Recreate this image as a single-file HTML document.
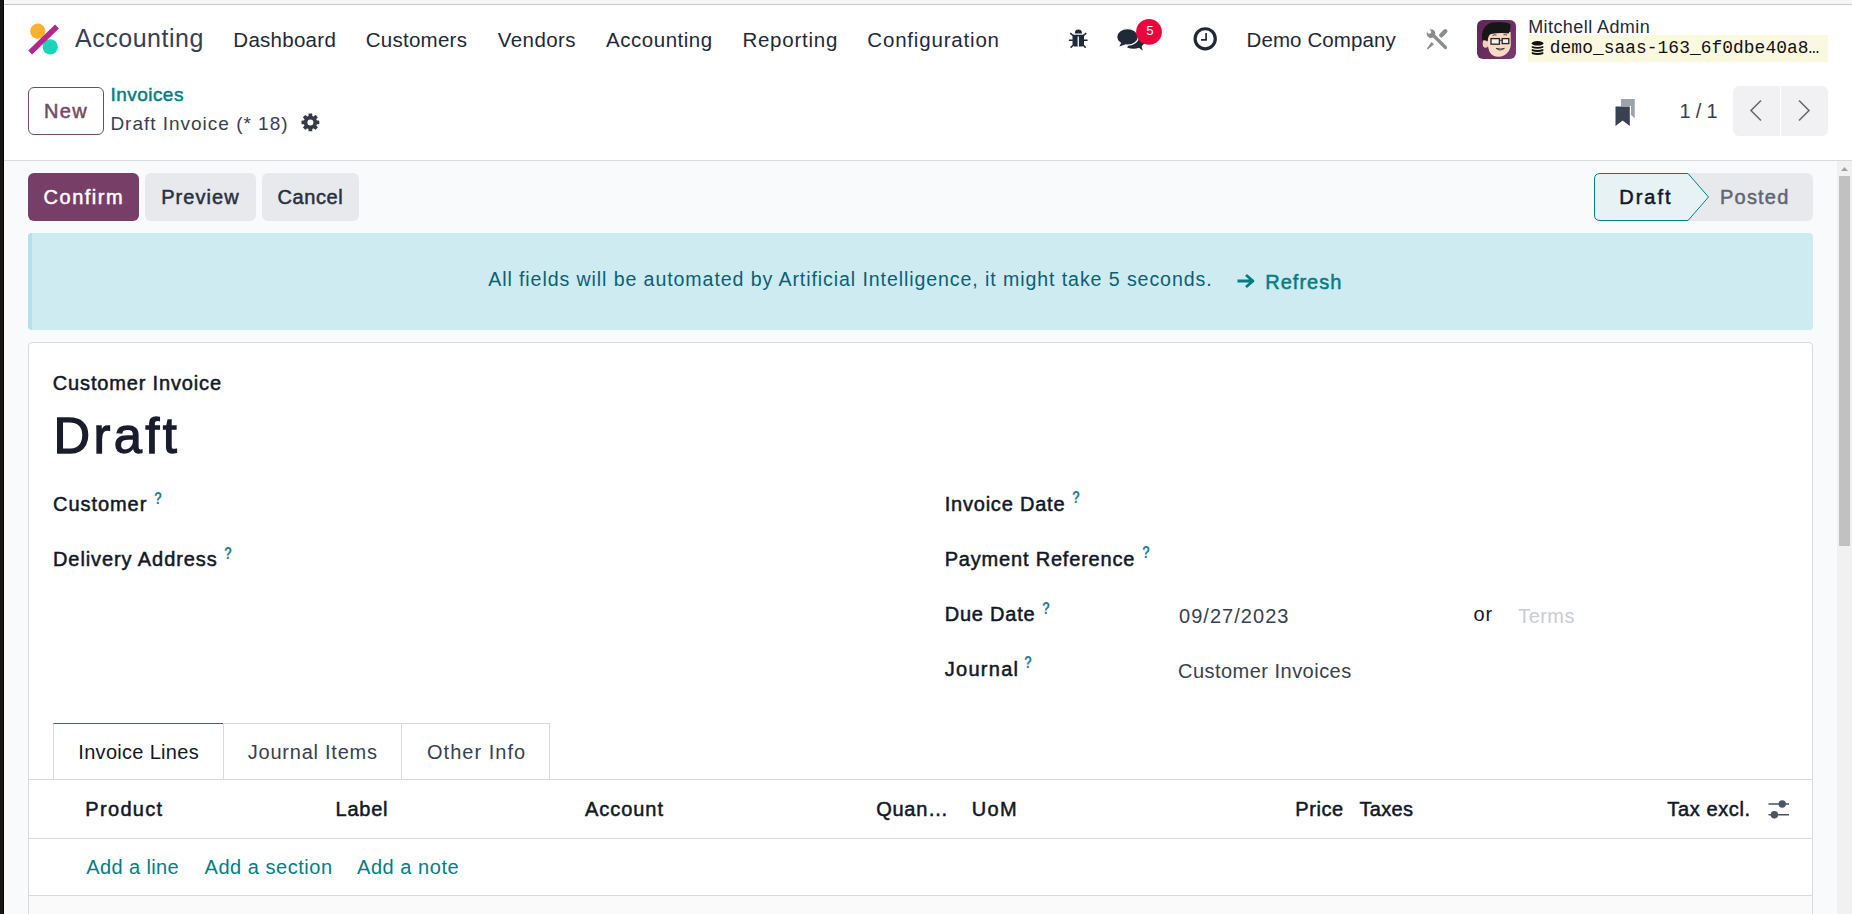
<!DOCTYPE html>
<html><head><meta charset="utf-8">
<style>
html,body{margin:0;padding:0}
body{width:1852px;height:914px;overflow:hidden;position:relative;background:#f9fafb;font-family:"Liberation Sans",sans-serif}
.a{position:absolute;box-sizing:border-box}
.t{position:absolute;white-space:nowrap}
svg{position:absolute;overflow:visible}
</style></head><body>
<!-- window frame -->
<div class="a" style="left:0;top:0;width:3px;height:914px;background:#171615"></div>
<div class="a" style="left:3px;top:0;width:1px;height:914px;background:#050505"></div>
<div class="a" style="left:4px;top:0;width:1848px;height:161px;background:#fff"></div>
<div class="a" style="left:5px;top:0;width:1847px;height:4px;background:#f6f6f6"></div>
<div class="a" style="left:4px;top:4px;width:1848px;height:1px;background:#c6c6c6"></div>
<div class="a" style="left:4px;top:160px;width:1848px;height:1px;background:#d8dadd"></div>

<!-- scrollbar -->
<div class="a" style="left:1837px;top:161px;width:15px;height:753px;background:#f1f1f1"></div>
<div class="a" style="left:1839px;top:176px;width:11px;height:370px;background:#c1c1c1"></div>
<svg style="left:1837px;top:161px" width="15" height="14"><polygon points="4,10 11,10 7.5,6" fill="#a3a3a3"/></svg>

<!-- logo -->
<svg style="left:20px;top:15px" width="50" height="50" viewBox="0 0 50 50">
  <circle cx="17.8" cy="16.2" r="7.6" fill="#fbb130"/>
  <circle cx="30.2" cy="31.9" r="7.6" fill="#1ad3bb"/>
  <line x1="10.2" y1="37.4" x2="37" y2="11.4" stroke="#b0278f" stroke-width="5.6" stroke-linecap="butt"/>
</svg>

<!-- bug icon -->
<svg style="left:1064px;top:24px" width="30" height="30" viewBox="0 0 30 30">
  <path d="M10.8 9.6 A3.6 4.1 0 0 1 18 9.6 Z" fill="#1f2937"/>
  <path d="M8.5 10.8 H20 V19.5 Q20 22.6 17 22.6 H11.5 Q8.5 22.6 8.5 19.5 Z" fill="#1f2937"/>
  <rect x="13.6" y="12.5" width="1.3" height="10.2" fill="#fff"/>
  <path d="M6.2 9.2 L9.2 11.6 M22.3 9.2 L19.3 11.6 M4.9 16.2 H8.8 M23.6 16.2 H19.7 M6.6 23.6 L9.4 21 M21.7 23.6 L19.1 21" stroke="#1f2937" stroke-width="1.5" fill="none"/>
</svg>

<!-- comments icon -->
<svg style="left:1112px;top:14px" width="54" height="42" viewBox="0 0 54 42">
  <path d="M15.2 33.4 C19 35 23.5 35 27 33.8 L30.8 36.8 L29.6 32.2 C33.5 29.5 34.5 25 33 21 L20 24 Z" fill="#1f2937"/>
  <ellipse cx="15.5" cy="22.9" rx="10.8" ry="8.3" fill="#1f2937" stroke="#fff" stroke-width="1.2"/>
  <path d="M9.2 28.8 L7.4 32.6 L13.8 30.2 Z" fill="#1f2937"/>
  <circle cx="37" cy="17.9" r="12.9" fill="#e8063c"/>
</svg>

<!-- clock icon -->
<svg style="left:1190px;top:24px" width="30" height="30" viewBox="0 0 30 30">
  <circle cx="15.2" cy="14.85" r="10.1" fill="none" stroke="#1f2937" stroke-width="3.2"/>
  <path d="M16.1 9 V15.9 H11" fill="none" stroke="#1f2937" stroke-width="1.7"/>
</svg>

<!-- tools icon -->
<svg style="left:1422px;top:24px" width="30" height="30" viewBox="0 0 30 30">
  <line x1="11.5" y1="11.5" x2="23.5" y2="23.5" stroke="#8b8c90" stroke-width="3.2" stroke-linecap="round"/>
  <circle cx="9" cy="9.6" r="4.3" fill="#8b8c90"/>
  <path d="M5.5 6 L8.4 9 L7.6 5 Z" fill="#fff"/>
  <circle cx="7.2" cy="7.8" r="2" fill="#fff"/>
  <line x1="19.3" y1="11.3" x2="23.3" y2="7.3" stroke="#8b8c90" stroke-width="4.4" stroke-linecap="round"/>
  <path d="M9.5 17.9 L12 20.3 L6.4 25 L4.9 25.4 L5.2 24 Z" fill="#8b8c90"/>
</svg>

<!-- avatar -->
<div class="a" style="left:1477px;top:20px;width:39px;height:39px;border-radius:6px;background:linear-gradient(120deg,#5b2752,#6e3064 60%,#7a3a70);overflow:hidden">
  <svg style="left:0;top:0" width="39" height="39" viewBox="0 0 39 39">
    <ellipse cx="8.6" cy="23.5" rx="2.9" ry="4.3" fill="#f5cdb0"/>
    <path d="M10.5 13 C10 20 10.5 28 13 32.5 C15 36 18.5 37 22 36.8 C28 36.2 33 32 33.8 25 L33.6 12 Z" fill="#f8dac3"/>
    <path d="M5.2 20.5 C4 12 7 4.5 15 2.6 C22 1.2 30 2.2 33.4 4 C33.8 8 33 12 31.5 13.6 C27 12.4 20 12.8 14 14 C11.5 15 11 18 10.6 21.5 C8.5 20 6.5 20 5.2 20.5 Z" fill="#161616"/>
    <path d="M15.5 15.6 Q17.5 14.2 19.5 15.2 M26.5 14.8 Q28.5 14.2 30 15.2" stroke="#3a2a2a" stroke-width="0.9" fill="none"/>
    <rect x="14" y="18.6" width="8.4" height="5.6" fill="#f4f1ee" stroke="#262626" stroke-width="1.3"/>
    <rect x="25.2" y="18.6" width="6.6" height="5" fill="#f4f1ee" stroke="#262626" stroke-width="1.3"/>
    <path d="M22.4 20.2 H25.2" stroke="#262626" stroke-width="1.1"/>
    <path d="M19.2 28.4 Q23.3 31.6 27.4 28.4 Q23.3 29.6 19.2 28.4 Z" fill="#fff" stroke="#3b2a2a" stroke-width="0.9"/>
  </svg>
</div>

<!-- db badge -->
<div class="a" style="left:1528px;top:35px;width:300px;height:27px;background:#fbf8e0"></div>
<svg style="left:1531px;top:41px" width="14" height="15" viewBox="0 0 14 15">
  <ellipse cx="6.55" cy="2.3" rx="5.8" ry="2.3" fill="#111"/>
  <path d="M0.8 4.9 Q6.55 6.9 12.3 4.9 L12.3 6.8 Q6.55 8.8 0.8 6.8 Z" fill="#111"/>
  <path d="M0.8 8.0 Q6.55 10.0 12.3 8.0 L12.3 9.9 Q6.55 11.9 0.8 9.9 Z" fill="#111"/>
  <path d="M0.8 11.0 Q6.55 13.0 12.3 11.0 L12.3 12.9 Q6.55 14.9 0.8 12.9 Z" fill="#111"/>
</svg>

<!-- New button -->
<div class="a" style="left:28px;top:87px;width:76px;height:48px;border:1px solid #714b67;border-radius:6px;background:#fff"></div>

<!-- gear -->
<svg style="left:300px;top:113px" width="21" height="19" viewBox="0 0 21 19">
  <g transform="translate(10.4,9.4)">
    <circle r="6.7" fill="#323a48"/>
    <g fill="#323a48">
      <rect x="-1.9" y="-8.9" width="3.8" height="17.8" rx="0.6"/>
      <rect x="-1.9" y="-8.9" width="3.8" height="17.8" rx="0.6" transform="rotate(45)"/>
      <rect x="-1.9" y="-8.9" width="3.8" height="17.8" rx="0.6" transform="rotate(90)"/>
      <rect x="-1.9" y="-8.9" width="3.8" height="17.8" rx="0.6" transform="rotate(135)"/>
    </g>
    <circle r="3" fill="#fff"/>
  </g>
</svg>

<!-- bookmarks -->
<svg style="left:1614px;top:98px" width="22" height="29" viewBox="0 0 22 29">
  <path d="M7 1 H20.5 V20 L19 18.6 V1 Z" fill="#9ca3af"/>
  <path d="M7 1 H20.5 V19.8 L17 17 V8 H7 Z" fill="#9ca3af"/>
  <path d="M1.5 8.5 H15.8 V28 L8.65 22.5 L1.5 28 Z" fill="#374151"/>
</svg>

<!-- pager -->
<div class="a" style="left:1733px;top:86px;width:95px;height:50px;border-radius:6px;background:#f1f1f4"></div>
<div class="a" style="left:1780px;top:86px;width:1px;height:50px;background:#fff"></div>
<svg style="left:1748px;top:99px" width="16" height="23" viewBox="0 0 16 23"><path d="M13 1.5 L3 11.5 L13 21.5" fill="none" stroke="#6b6b6b" stroke-width="1.6"/></svg>
<svg style="left:1796px;top:99px" width="16" height="23" viewBox="0 0 16 23"><path d="M3 1.5 L13 11.5 L3 21.5" fill="none" stroke="#6b6b6b" stroke-width="1.6"/></svg>

<!-- action buttons -->
<div class="a" style="left:28px;top:173px;width:111px;height:48px;border-radius:6px;background:#773e68"></div>
<div class="a" style="left:145px;top:173px;width:111px;height:48px;border-radius:6px;background:#e7e9ed"></div>
<div class="a" style="left:262px;top:173px;width:97px;height:48px;border-radius:6px;background:#e7e9ed"></div>

<!-- statusbar -->
<div class="a" style="left:1680px;top:173px;width:133px;height:48px;border-radius:0 6px 6px 0;background:#e7e9ed"></div>
<svg style="left:1594px;top:173px" width="118" height="48" viewBox="0 0 118 48">
  <path d="M6 0.5 H94 L114.5 24 L94 47.5 H6 Q0.5 47.5 0.5 42 V6 Q0.5 0.5 6 0.5 Z" fill="#e6f2f3" stroke="#017e84" stroke-width="1"/>
</svg>

<!-- banner -->
<div class="a" style="left:28px;top:233px;width:1785px;height:97px;border-radius:4px;background:#cdebf0;overflow:hidden"><div class="a" style="left:0;top:0;width:4px;height:97px;background:#b5e1e9"></div></div>
<svg style="left:1236px;top:273px" width="20" height="16" viewBox="0 0 20 16">
  <path d="M1.5 8 H16.5 M10 2 L17 8 L10 14" fill="none" stroke="#017e84" stroke-width="2.8" stroke-linejoin="round"/>
</svg>

<!-- sheet -->
<div class="a" style="left:28px;top:342px;width:1785px;height:620px;border:1px solid #d8dadd;border-radius:4px;background:#fff"></div>

<!-- tabs -->
<div class="a" style="left:29px;top:779px;width:1783px;height:1px;background:#d8dadd"></div>
<div class="a" style="left:53px;top:723px;width:171px;height:56px;border:1px solid #d8dadd;border-top-color:#714b67;border-bottom:none;background:#fff"></div>
<div class="a" style="left:223px;top:723px;width:179px;height:56px;border:1px solid #d8dadd;border-left:none;border-bottom:none"></div>
<div class="a" style="left:401px;top:723px;width:149px;height:56px;border:1px solid #d8dadd;border-bottom:none"></div>

<!-- table -->
<div class="a" style="left:29px;top:838px;width:1783px;height:1px;background:#d8dadd"></div>
<div class="a" style="left:29px;top:895px;width:1783px;height:1px;background:#d8dadd"></div>
<div class="a" style="left:29px;top:896px;width:1783px;height:18px;background:#fafafa"></div>
<svg style="left:1766px;top:798px" width="26" height="22" viewBox="0 0 26 22">
  <path d="M2.5 6 H23 M2.5 16.8 H23" stroke="#475160" stroke-width="1.5"/>
  <circle cx="16.2" cy="6" r="3.7" fill="#4b5563"/>
  <circle cx="8.4" cy="16.8" r="3.7" fill="#4b5563"/>
</svg>

<span class="t" style="left:75.00px;top:25.75px;font:400 25px/1 'Liberation Sans', sans-serif;letter-spacing:0.523px;color:#374151">Accounting</span>
<span class="t" style="left:233.30px;top:29.57px;font:400 20.5px/1 'Liberation Sans', sans-serif;letter-spacing:0.277px;color:#1f2937">Dashboard</span>
<span class="t" style="left:365.70px;top:29.57px;font:400 20.5px/1 'Liberation Sans', sans-serif;letter-spacing:0.268px;color:#1f2937">Customers</span>
<span class="t" style="left:497.80px;top:29.57px;font:400 20.5px/1 'Liberation Sans', sans-serif;letter-spacing:0.421px;color:#1f2937">Vendors</span>
<span class="t" style="left:606.10px;top:29.57px;font:400 20.5px/1 'Liberation Sans', sans-serif;letter-spacing:0.519px;color:#1f2937">Accounting</span>
<span class="t" style="left:742.40px;top:29.57px;font:400 20.5px/1 'Liberation Sans', sans-serif;letter-spacing:0.764px;color:#1f2937">Reporting</span>
<span class="t" style="left:867.30px;top:29.57px;font:400 20.5px/1 'Liberation Sans', sans-serif;letter-spacing:0.814px;color:#1f2937">Configuration</span>
<span class="t" style="left:1246.50px;top:29.57px;font:400 20.5px/1 'Liberation Sans', sans-serif;letter-spacing:0.112px;color:#1f2937">Demo Company</span>
<span class="t" style="left:1528.20px;top:17.70px;font:400 18px/1 'Liberation Sans', sans-serif;letter-spacing:0.421px;color:#1f2937">Mitchell Admin</span>
<span class="t" style="left:1549.80px;top:40.43px;font:400 17.85px/1 'Liberation Mono', monospace;letter-spacing:0.071px;color:#111">demo_saas-163_6f0dbe40a8…</span>
<span class="t" style="left:44.10px;top:101.00px;font:400 20px/1 'Liberation Sans', sans-serif;-webkit-text-stroke:0.5px #714b67;letter-spacing:1.267px;color:#714b67">New</span>
<span class="t" style="left:1146.20px;top:23.78px;font:400 13.2px/1 'Liberation Sans', sans-serif;letter-spacing:0.000px;color:#ffffff">5</span>
<span class="t" style="left:110.40px;top:84.85px;font:400 19px/1 'Liberation Sans', sans-serif;-webkit-text-stroke:0.5px #017e84;letter-spacing:0.471px;color:#017e84">Invoices</span>
<span class="t" style="left:110.40px;top:113.85px;font:400 19px/1 'Liberation Sans', sans-serif;letter-spacing:0.986px;color:#374151">Draft Invoice (* 18)</span>
<span class="t" style="left:1679.40px;top:101.00px;font:400 20px/1 'Liberation Sans', sans-serif;letter-spacing:-0.173px;color:#374151">1 / 1</span>
<span class="t" style="left:43.60px;top:187.00px;font:400 20px/1 'Liberation Sans', sans-serif;-webkit-text-stroke:0.5px #ffffff;letter-spacing:1.508px;color:#ffffff">Confirm</span>
<span class="t" style="left:161.20px;top:187.00px;font:400 20px/1 'Liberation Sans', sans-serif;-webkit-text-stroke:0.5px #283040;letter-spacing:1.068px;color:#283040">Preview</span>
<span class="t" style="left:277.60px;top:187.00px;font:400 20px/1 'Liberation Sans', sans-serif;-webkit-text-stroke:0.5px #283040;letter-spacing:0.577px;color:#283040">Cancel</span>
<span class="t" style="left:1619.20px;top:187.00px;font:400 20px/1 'Liberation Sans', sans-serif;-webkit-text-stroke:0.5px #111827;letter-spacing:2.029px;color:#111827">Draft</span>
<span class="t" style="left:1720.00px;top:187.00px;font:400 20px/1 'Liberation Sans', sans-serif;-webkit-text-stroke:0.5px #5f6673;letter-spacing:1.211px;color:#5f6673">Posted</span>
<span class="t" style="left:488.20px;top:270.34px;font:400 19.6px/1 'Liberation Sans', sans-serif;letter-spacing:0.902px;color:#0c5f75">All fields will be automated by Artificial Intelligence, it might take 5 seconds.</span>
<span class="t" style="left:1265.30px;top:272.00px;font:400 20px/1 'Liberation Sans', sans-serif;-webkit-text-stroke:0.5px #017e84;letter-spacing:0.999px;color:#017e84">Refresh</span>
<span class="t" style="left:52.80px;top:373.00px;font:400 20px/1 'Liberation Sans', sans-serif;-webkit-text-stroke:0.5px #111827;letter-spacing:0.841px;color:#111827">Customer Invoice</span>
<span class="t" style="left:53.60px;top:410.90px;font:400 50.7px/1 'Liberation Sans', sans-serif;-webkit-text-stroke:1.3px #1a1c2e;letter-spacing:3.361px;color:#1a1c2e">Draft</span>
<span class="t" style="left:53.00px;top:494.00px;font:400 20px/1 'Liberation Sans', sans-serif;-webkit-text-stroke:0.5px #111827;letter-spacing:0.953px;color:#111827">Customer</span>
<span class="t" style="left:53.00px;top:549.00px;font:400 20px/1 'Liberation Sans', sans-serif;-webkit-text-stroke:0.5px #111827;letter-spacing:0.909px;color:#111827">Delivery Address</span>
<span class="t" style="left:944.70px;top:494.00px;font:400 20px/1 'Liberation Sans', sans-serif;-webkit-text-stroke:0.5px #111827;letter-spacing:0.786px;color:#111827">Invoice Date</span>
<span class="t" style="left:944.70px;top:549.00px;font:400 20px/1 'Liberation Sans', sans-serif;-webkit-text-stroke:0.5px #111827;letter-spacing:0.810px;color:#111827">Payment Reference</span>
<span class="t" style="left:944.70px;top:604.00px;font:400 20px/1 'Liberation Sans', sans-serif;-webkit-text-stroke:0.5px #111827;letter-spacing:0.790px;color:#111827">Due Date</span>
<span class="t" style="left:944.70px;top:659.00px;font:400 20px/1 'Liberation Sans', sans-serif;-webkit-text-stroke:0.5px #111827;letter-spacing:1.291px;color:#111827">Journal</span>
<span class="t" style="left:1179.00px;top:606.00px;font:400 20px/1 'Liberation Sans', sans-serif;letter-spacing:1.036px;color:#374151">09/27/2023</span>
<span class="t" style="left:1473.50px;top:604.00px;font:400 20px/1 'Liberation Sans', sans-serif;letter-spacing:0.877px;color:#111827">or</span>
<span class="t" style="left:1518.20px;top:606.00px;font:400 20px/1 'Liberation Sans', sans-serif;letter-spacing:0.464px;color:#c9ccd2">Terms</span>
<span class="t" style="left:1178.00px;top:661.00px;font:400 20px/1 'Liberation Sans', sans-serif;letter-spacing:0.474px;color:#374151">Customer Invoices</span>
<span class="t" style="left:78.30px;top:742.00px;font:400 20px/1 'Liberation Sans', sans-serif;letter-spacing:0.305px;color:#111827">Invoice Lines</span>
<span class="t" style="left:247.80px;top:742.00px;font:400 20px/1 'Liberation Sans', sans-serif;letter-spacing:0.763px;color:#374151">Journal Items</span>
<span class="t" style="left:427.00px;top:742.00px;font:400 20px/1 'Liberation Sans', sans-serif;letter-spacing:1.021px;color:#374151">Other Info</span>
<span class="t" style="left:85.30px;top:799.00px;font:400 20px/1 'Liberation Sans', sans-serif;-webkit-text-stroke:0.5px #111827;letter-spacing:1.322px;color:#111827">Product</span>
<span class="t" style="left:335.50px;top:799.00px;font:400 20px/1 'Liberation Sans', sans-serif;-webkit-text-stroke:0.5px #111827;letter-spacing:0.777px;color:#111827">Label</span>
<span class="t" style="left:585.00px;top:799.00px;font:400 20px/1 'Liberation Sans', sans-serif;-webkit-text-stroke:0.5px #111827;letter-spacing:0.949px;color:#111827">Account</span>
<span class="t" style="left:876.20px;top:799.00px;font:400 20px/1 'Liberation Sans', sans-serif;-webkit-text-stroke:0.5px #111827;letter-spacing:0.744px;color:#111827">Quan…</span>
<span class="t" style="left:971.70px;top:799.00px;font:400 20px/1 'Liberation Sans', sans-serif;-webkit-text-stroke:0.5px #111827;letter-spacing:1.417px;color:#111827">UoM</span>
<span class="t" style="left:1295.20px;top:799.00px;font:400 20px/1 'Liberation Sans', sans-serif;-webkit-text-stroke:0.5px #111827;letter-spacing:0.614px;color:#111827">Price</span>
<span class="t" style="left:1359.50px;top:799.00px;font:400 20px/1 'Liberation Sans', sans-serif;-webkit-text-stroke:0.5px #111827;letter-spacing:0.313px;color:#111827">Taxes</span>
<span class="t" style="left:1667.30px;top:799.00px;font:400 20px/1 'Liberation Sans', sans-serif;-webkit-text-stroke:0.5px #111827;letter-spacing:0.619px;color:#111827">Tax excl.</span>
<span class="t" style="left:86.30px;top:857.00px;font:400 20px/1 'Liberation Sans', sans-serif;letter-spacing:0.385px;color:#017e84">Add a line</span>
<span class="t" style="left:204.50px;top:857.00px;font:400 20px/1 'Liberation Sans', sans-serif;letter-spacing:0.536px;color:#017e84">Add a section</span>
<span class="t" style="left:357.00px;top:857.00px;font:400 20px/1 'Liberation Sans', sans-serif;letter-spacing:0.542px;color:#017e84">Add a note</span>
<span class="t" style="left:153.80px;top:489.98px;font:700 16.5px/1 'Liberation Sans', sans-serif;letter-spacing:0.000px;color:#1f7f96;transform:scaleX(0.8);transform-origin:0 0">?</span>
<span class="t" style="left:224.40px;top:544.98px;font:700 16.5px/1 'Liberation Sans', sans-serif;letter-spacing:0.000px;color:#1f7f96;transform:scaleX(0.8);transform-origin:0 0">?</span>
<span class="t" style="left:1071.80px;top:488.98px;font:700 16.5px/1 'Liberation Sans', sans-serif;letter-spacing:0.000px;color:#1f7f96;transform:scaleX(0.8);transform-origin:0 0">?</span>
<span class="t" style="left:1141.70px;top:543.98px;font:700 16.5px/1 'Liberation Sans', sans-serif;letter-spacing:0.000px;color:#1f7f96;transform:scaleX(0.8);transform-origin:0 0">?</span>
<span class="t" style="left:1042.00px;top:599.98px;font:700 16.5px/1 'Liberation Sans', sans-serif;letter-spacing:0.000px;color:#1f7f96;transform:scaleX(0.8);transform-origin:0 0">?</span>
<span class="t" style="left:1024.40px;top:653.98px;font:700 16.5px/1 'Liberation Sans', sans-serif;letter-spacing:0.000px;color:#1f7f96;transform:scaleX(0.8);transform-origin:0 0">?</span>
</body></html>
